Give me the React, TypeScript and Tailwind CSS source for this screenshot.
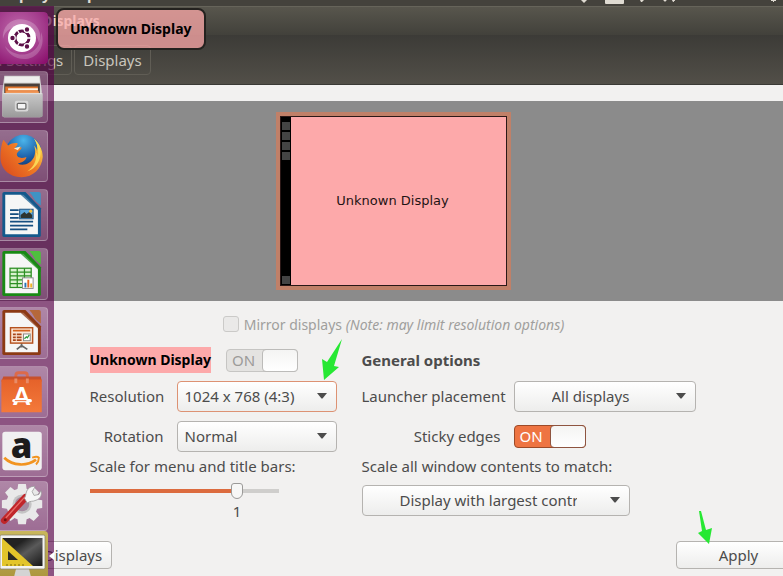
import { useState, type ReactNode } from 'react'
import { clsx } from 'clsx'

function DashIcon() {
  return (
    <svg viewBox="0 0 48 52" className="block h-full w-full">
      <defs>
        <radialGradient id="dash" cx="0.45" cy="0.35" r="0.8">
          <stop offset="0" stopColor="#c06bac" />
          <stop offset="0.6" stopColor="#a23a8b" />
          <stop offset="1" stopColor="#8a0f6c" />
        </radialGradient>
      </defs>
      <rect x="-4" width="52" height="52" rx="4" fill="url(#dash)" />
      <path d="M3 27C2 12 14 5 26 8s17 14 13 23c-2-9-7-15-16-16S5 17 3 27z" fill="#fff" opacity="0.22" />
      <path d="M41 20c5 12-2 26-15 27-10 1-19-6-21-13 6 7 14 10 22 8s14-9 14-22z" fill="#fff" opacity="0.2" />
      <circle cx="22" cy="26" r="14" fill="#fff" />
      <circle cx="22" cy="26" r="7" fill="none" stroke="#5d1049" strokeWidth="3" />
      {[[12.5, 26], [27, 17.5], [27, 34.5]].map(([x, y]) => (
        <circle key={`${x}-${y}`} cx={x} cy={y} r="2.8" fill="#5d1049" stroke="#fff" strokeWidth="1.2" />
      ))}
      <path d="M22 26l-5-8.500M22 26l-5 8.500M22 26h9" stroke="#fff" strokeWidth="1.300" />
      <circle cx="22" cy="26" r="5.300" fill="#fff" />
    </svg>
  )
}

function FilesIcon() {
  return (
    <svg viewBox="0 0 48 52" className="block h-full w-full">
      <defs>
        <linearGradient id="files" x2="0" y2="1">
          <stop offset="0" stopColor="#c9c9c9" />
          <stop offset="1" stopColor="#9a9a9a" />
        </linearGradient>
      </defs>
      <path d="M4 4h37l2 16v25q0 2-2 2H4q-2 0-2-2V20z" fill="#d5d5d3" />
      <path d="M5 5h35l1 6H4z" fill="#efefed" />
      <rect x="4" y="12" width="37" height="11" fill="#4a403a" />
      <path d="M5 15h34v8H5z" fill="#e2762d" />
      <path d="M8 17h31v2H8z" fill="#fff3e0" />
      <path d="M6 20h34v3H6z" fill="#f0995a" />
      <path d="M2 22h42v23q0 2-2 2H4q-2 0-2-2z" fill="url(#files)" />
      <path d="M3 22.5h40" stroke="#e3e3e3" />
      <rect x="15" y="30" width="14" height="11" rx="2" fill="#d8d8d8" />
      <rect x="17.5" y="32.500" width="9" height="6" rx="1" fill="#f4f4f4" stroke="#6b6b6b" strokeWidth="1.300" />
    </svg>
  )
}

function FirefoxIcon() {
  return (
    <svg viewBox="0 0 48 52" className="block h-full w-full">
      <defs>
        <radialGradient id="globe" cx="0.5" cy="0.15" r="0.8">
          <stop offset="0" stopColor="#4bb4ea" />
          <stop offset="0.6" stopColor="#1c5fa8" />
          <stop offset="1" stopColor="#0e2f66" />
        </radialGradient>
        <linearGradient id="fox" x1="0" y1="1" x2="1" y2="0.2">
          <stop offset="0" stopColor="#d8451c" />
          <stop offset="0.6" stopColor="#ef7a25" />
          <stop offset="1" stopColor="#fbd84a" />
        </linearGradient>
      </defs>
      <circle cx="24" cy="23" r="19" fill="url(#globe)" />
      <path d="M3 9l5 6c4-2 7-3 10-2 0 2-2 3-3 5l7-1c0 3-4 4-5 7 0 4 5 5 10 3 0 4-6 6-9 7 7 3 14-1 17-7 2-5 1-9 0-12 2 2 3 4 3 6 1-4 0-9-3-13 6 5 9 12 9 19-1 12-10 21-22 21C9 48 0 39 0 27 0 20 1 14 3 9z" fill="url(#fox)" />
      <path d="M35 8c7 6 8 14 6 20-2 7-7 12-13 14 8-6 10-13 9-20 1 1 2 3 2 5 1-8-1-14-4-19z" fill="#fbe25c" opacity="0.85" />
      <path d="M14 18l7-2-3 4z" fill="#fbe9c8" />
    </svg>
  )
}

// LibreOffice page with the folded corner, coloured per application
function OfficePage({ color, fold, children }: { color: string; fold: string; children: ReactNode }) {
  return (
    <svg viewBox="0 0 48 52" className="block h-full w-full">
      <path d="M4 2h22l16 17v28q0 2-2 2H4q-2 0-2-2V4q0-2 2-2z" fill={color} />
      <path d="M5 5h19l15 15v26H5z" fill="#f6f6f6" />
      <path d="M25 2l17 17v5L21 5z" fill={color} opacity="0.75" />
      <path d="M30 2h10q2 0 2 2v12q-6-4-7-7-2-4-5-7z" fill={fold} />
      {children}
    </svg>
  )
}

function WriterIcon() {
  return (
    <OfficePage color="#14598c" fold="#3f93c4">
      <path d="M10 21h9M10 25h9M10 29h9M10 33h24M10 37h24M10 41h18" stroke="#164f80" strokeWidth="1.800" />
      <rect x="20" y="20" width="14" height="10" fill="#5aa6dc" stroke="#1b4f7d" />
      <path d="M21 29v-3l4-3 2 2 3-2 3 3v3z" fill="#2c3430" />
      <circle cx="31.500" cy="22" r="1.600" fill="#f2bd3a" />
    </OfficePage>
  )
}

function CalcIcon() {
  return (
    <OfficePage color="#188a14" fold="#4fbf3f">
      <rect x="10" y="20" width="22" height="20" fill="#d9f2cf" stroke="#2b8f22" strokeWidth="1.300" />
      <path d="M10 24h22M10 28h22M10 32h22M10 36h22M17.500 20v20M25 20v20" stroke="#2b8f22" strokeWidth="1.300" />
      <rect x="23" y="30" width="11" height="11" fill="#fff" stroke="#8a8a8a" />
      <path d="M25 35h2v5h-2z" fill="#2a72b5" />
      <path d="M28 32h2v8h-2z" fill="#e8641c" />
      <path d="M31 36h2v4h-2z" fill="#f0b429" />
    </OfficePage>
  )
}

function ImpressIcon() {
  return (
    <OfficePage color="#8c3a14" fold="#b5683a">
      <path d="M17 43l5-4 6 4M22 35v6" stroke="#666" strokeWidth="1.800" fill="none" />
      <rect x="10.500" y="20.500" width="23" height="16" fill="#fbe6d6" stroke="#b5521f" strokeWidth="1.500" />
      <path d="M13 23.500h18" stroke="#d4641f" strokeWidth="2" />
      <path d="M13 27.500h3M17 27.500h5M13 30.500h3M17 30.500h5M13 33.500h3M17 33.500h5" stroke="#a8461a" strokeWidth="1.800" />
      <rect x="24" y="27" width="7" height="7" fill="#fff" stroke="#888" />
      <path d="M25 32l2-2 1 1 2-3" stroke="#2f9a3d" strokeWidth="1.300" fill="none" />
    </OfficePage>
  )
}

function SoftwareIcon() {
  return (
    <svg viewBox="0 0 48 52" className="block h-full w-full">
      <defs>
        <linearGradient id="bag" x2="0" y2="1">
          <stop offset="0" stopColor="#e5622a" />
          <stop offset="1" stopColor="#f4793a" />
        </linearGradient>
      </defs>
      <path d="M16 14V9q0-3 3-3h6q3 0 3 3v5" fill="none" stroke="#dc6a4a" strokeWidth="3" />
      <path d="M3 10h39l1 5H1z" fill="#c8502c" />
      <path d="M1 13h42v34H1z" fill="url(#bag)" />
      <path d="M16 12v5M28 12v5" stroke="#e88c68" strokeWidth="3" />
      <text x="22" y="40" textAnchor="middle" fontFamily="Lato, sans-serif" fontWeight="900" fontSize="25" fill="#fff">A</text>
      <path d="M14 35h17" stroke="#fff" strokeWidth="3.500" strokeLinecap="round" />
      <path d="M15 35h12" stroke="#ed6c32" strokeWidth="1" />
    </svg>
  )
}

function AmazonIcon() {
  return (
    <svg viewBox="0 0 48 52" className="block h-full w-full">
      <rect x="2" y="6" width="41" height="40" rx="3" fill="#f1f1f1" />
      <text x="22" y="33" textAnchor="middle" fontFamily="'Open Sans', sans-serif" fontWeight="800" fontSize="36" fill="#1c1c1c">a</text>
      <path d="M4 33c9 9 24 9 33 2" fill="none" stroke="#f29420" strokeWidth="2.800" />
      <path d="M33 33q5-2 7 0 0 4-3 7" fill="none" stroke="#f29420" strokeWidth="2" />
    </svg>
  )
}

function SettingsIcon() {
  return (
    <svg viewBox="0 0 48 50" className="block h-full w-full">
      <g transform="translate(22.500 23)" fill="#e9e9e9">
        {[0, 45, 90, 135].map((a) => (
          <path key={a} d="M-4-21h8l1 7V14l-1 7h-8l-1-7v-28z" transform={`rotate(${a})`} />
        ))}
        <circle r="16.500" />
        <circle r="10" fill="#c4c4c4" />
        <circle r="7.500" fill="#a58a9f" />
      </g>
      <path d="M4 40L26 16" stroke="#c0262a" strokeWidth="7" strokeLinecap="round" />
      <path d="M6 37L25 16" stroke="#e66a66" strokeWidth="1.500" strokeLinecap="round" />
      <circle cx="5" cy="39.500" r="1.500" fill="#731215" />
      <path d="M25 17c2-3 1-7 4-10 2-2 5-3 7-2l-3 5 2 4 5-1 2-4c2 4-1 9-5 10-4 2-6 0-9 3z" fill="#f6f6f6" stroke="#9a9a9a" strokeWidth="0.800" />
    </svg>
  )
}

function DisplaysIcon() {
  return (
    <svg viewBox="0 0 48 52" className="block h-full w-full">
      <defs>
        <linearGradient id="screen" x2="1" y2="1">
          <stop offset="0.300" stopColor="#222" />
          <stop offset="0.550" stopColor="#5a5a5a" />
          <stop offset="1" stopColor="#161616" />
        </linearGradient>
      </defs>
      <path d="M16 38h13l2 8H14z" fill="#d4d4d4" />
      <path d="M10 45h25v4H10z" fill="#ececec" />
      <rect x="0" y="4" width="45" height="34" rx="1.500" fill="#f3f3f1" stroke="#8a8570" strokeWidth="0.800" />
      <rect x="2.500" y="7" width="40" height="28" fill="url(#screen)" />
      <path d="M2 7v28h31z" fill="#e3c52a" />
      <path d="M8 20v9h10z" fill="#2a2a22" />
      <path d="M7 35v-2M11 35v-2M15 35v-2M19 35v-2M23 35v-2" stroke="#7d6a0d" />
    </svg>
  )
}

const PLAIN_TILE = 'border border-l-0 border-white/20 bg-linear-to-b from-white/30 to-white/15'

// The last two tiles are folded together at the bottom of the launcher
const APPS = [
  { name: 'Dash',            icon: <DashIcon />,     tile: 'mb-[7px] h-[52px]' },
  { name: 'Files',           icon: <FilesIcon />,    tile: clsx('mb-[7px] h-[52px]', PLAIN_TILE) },
  { name: 'Firefox',         icon: <FirefoxIcon />,  tile: clsx('mb-[7px] h-[52px]', PLAIN_TILE) },
  { name: 'Writer',          icon: <WriterIcon />,   tile: clsx('mb-[7px] h-[52px]', PLAIN_TILE) },
  { name: 'Calc',            icon: <CalcIcon />,     tile: clsx('mb-[7px] h-[52px]', PLAIN_TILE) },
  { name: 'Impress',         icon: <ImpressIcon />,  tile: clsx('mb-[7px] h-[52px]', PLAIN_TILE) },
  { name: 'Software',        icon: <SoftwareIcon />, tile: clsx('mb-[7px] h-[52px]', PLAIN_TILE) },
  { name: 'Amazon',          icon: <AmazonIcon />,   tile: clsx('mb-1 h-[52px]', PLAIN_TILE) },
  { name: 'System Settings', icon: <SettingsIcon />, tile: clsx('h-[50px]', PLAIN_TILE) },
  { name: 'Displays',        icon: <DisplaysIcon />, tile: 'h-[52px] bg-linear-to-b from-[#c9b75c] to-[#a8923a]' },
]

function Launcher() {
  return (
    <nav aria-label="Launcher" className="absolute top-1.5 bottom-0 left-0 w-[54px] overflow-hidden bg-[#560046]/65 pt-1.5">
      {APPS.map((app) => (
        <button key={app.name} aria-label={app.name} className={clsx('block w-12 overflow-hidden rounded-r-[4px]', app.tile)}>
          {app.icon}
        </button>
      ))}
      <svg viewBox="0 0 5 8" className="absolute right-0 bottom-4 h-2 w-[5px]">
        <path d="M5 0v8L0 4z" fill="#fff" />
      </svg>
    </nav>
  )
}

// Only the bottom edge of the desktop panel is in view
function TopPanel() {
  return (
    <div className="flex h-1.5 items-end justify-between overflow-hidden bg-[#44423c] text-[15px] leading-none font-bold text-[#dfdbd2]">
      <div className="flex gap-1 pb-1">
        <span className="-ml-1">Displays</span>
        <span>Help</span>
      </div>
      <svg viewBox="0 0 210 6" className="h-1.5 w-[210px]" fill="#dfdbd2">
        <path d="M8 0h6l-3 3z" />
        <rect x="32" y="-4" width="19" height="8" rx="1" />
        <path d="M67 0h4l-2 2h-1z" />
        <path d="M99 0l3 0-2 2M91 0h2v1h-2z" stroke="#dfdbd2" strokeWidth="0.800" />
        <path d="M198 0h5v1h-2v1h-1v-1h-2z" />
      </svg>
    </div>
  )
}

type ComboProps = { id: string; value: string; className?: string; textClass?: string }

function Combo({ id, value, className, textClass = 'pl-[7px] pr-8' }: ComboProps) {
  return (
    <div className={clsx('relative', className)}>
      <select
        id={id}
        className={clsx(
          'block h-[31px] w-full appearance-none rounded-[4px] border bg-linear-to-b from-white to-[#ededec] text-[15px] text-[#4c4c4c] outline-none',
          id === 'resolution' ? 'border-[#dd9273]' : 'border-[#b5b3b0]',
          textClass
        )}
      >
        <option>{value}</option>
      </select>
      <svg viewBox="0 0 10 6" className="pointer-events-none absolute top-3 right-[10px] h-1.5 w-[10px]">
        <path d="M0 0h10L5.500 5.500h-1z" fill="#4c4c4c" />
      </svg>
    </div>
  )
}

function Switch({ label, disabled = false }: { label: string; disabled?: boolean }) {
  const [on, setOn] = useState(true)

  return (
    <button
      role="switch"
      aria-checked={on}
      aria-label={label}
      disabled={disabled}
      onClick={() => setOn(!on)}
      className={clsx(
        'flex h-[23px] w-[72px] items-center justify-between rounded-[4px] border text-[15px]',
        disabled ? 'border-[#c6c5c3] bg-[#e4e3e1] text-[#9c9b99]' : 'border-[#9c4a28] bg-[#ee7442] text-white',
        !on && 'flex-row-reverse'
      )}
    >
      <span className="pl-[5px]">{on ? 'ON' : 'OFF'}</span>
      <span
        className={clsx(
          '-m-px h-[23px] w-9 rounded-[4px] border bg-linear-to-b from-[#f4f4f3] to-white',
          disabled ? 'border-[#bcbbb9]' : 'border-[#8e5440]'
        )}
      />
    </button>
  )
}

function ScaleSlider() {
  const [scale, setScale] = useState(1)
  const filled = (scale / 1.25) * 100

  return (
    <div className="w-[189px]">
      <input
        id="scale"
        type="range"
        min={0}
        max={1.25}
        step={0.125}
        value={scale}
        onChange={(e) => setScale(Number(e.target.value))}
        className="block h-5 w-full appearance-none bg-[length:100%_4px] bg-center bg-no-repeat outline-none [&::-webkit-slider-thumb]:h-4 [&::-webkit-slider-thumb]:w-3 [&::-webkit-slider-thumb]:appearance-none [&::-webkit-slider-thumb]:rounded-t-[3px] [&::-webkit-slider-thumb]:rounded-b-[6px] [&::-webkit-slider-thumb]:border [&::-webkit-slider-thumb]:border-[#9b9a98] [&::-webkit-slider-thumb]:bg-[#f7f7f6]"
        style={{ backgroundImage: `linear-gradient(to right, #dc6b3e ${filled}%, #cfcecc ${filled}%)` }}
      />
      <div className="px-1.5">
        <output htmlFor="scale" className="block h-5 w-0 leading-5" style={{ marginLeft: `${filled}%` }}>
          <span className="flex w-0 justify-center">{scale}</span>
        </output>
      </div>
    </div>
  )
}

export default function App() {
  return (
    <div className="relative flex h-screen flex-col overflow-hidden bg-[#f2f1f0] font-['Noto_Sans','Open_Sans',sans-serif] text-[15px] text-[#4c4c4c]">
      <TopPanel />

      {/* Title bar and breadcrumbs */}
      <header className="border-b border-[#3a3935] text-[#c9c5bc]">
        <div className="h-[29px] border-t border-[#66645a] bg-linear-to-b from-[#58564d] to-[#42413b] pl-[42px] text-[14px] leading-7 font-bold text-[#dfdbd2]">
          Displays
        </div>
        <div className="flex h-[49px] items-start gap-0.5 bg-linear-to-b from-[#3c3b37] to-[#524f48] pt-[10px] text-[15px]">
          <button className="-ml-[24px] h-[30px] rounded-[4px] border border-[#605d55] px-2 leading-7">All Settings</button>
          <button className="h-[30px] rounded-[4px] border border-[#605d55] px-2 leading-7">Displays</button>
        </div>
      </header>

      <main>
        {/* Monitor arrangement */}
        <div className="mt-4 flex h-[200px] items-center justify-center bg-[#8b8b8b] pl-1">
          <div className="h-[178px] w-[235px] border-4 border-[#c08068]">
            <div className="flex h-full border border-[#2b1817] bg-[#fda9aa]">
              <div className="flex w-[10px] flex-col gap-0.5 bg-black px-px pt-[5px] pb-px">
                <span className="h-2 bg-[#444]" />
                <span className="h-2 bg-[#444]" />
                <span className="h-2 bg-[#444]" />
                <span className="h-2 bg-[#444]" />
                <span className="mt-auto h-2 bg-[#444]" />
              </div>
              <div className="flex flex-1 items-center justify-center pr-3 font-['DejaVu_Sans',sans-serif] text-[13px] text-[#1f1414]">
                Unknown Display
              </div>
            </div>
          </div>
        </div>

        <div className="flex h-[46px] items-center justify-center gap-[5px] pl-1 text-[14px] text-[#a09f9d]">
          <input id="mirror" type="checkbox" disabled className="h-4 w-4 appearance-none rounded-[3px] border border-[#cbcac8] bg-[#eae9e8]" />
          <label htmlFor="mirror">
            Mirror displays <i>(Note: may limit resolution options)</i>
          </label>
        </div>

        <div className="flex justify-center gap-[25px] pl-0.5">
          <section className="w-[247px]">
            <div className="mb-2 flex h-[26px] items-center gap-[15px]">
              <h2 className="bg-[#fda9aa] text-[14px] leading-[26px] font-bold text-black">Unknown Display</h2>
              <Switch label="Unknown Display" disabled />
            </div>
            <div className="grid grid-cols-[74px_160px] items-center gap-x-[13px] gap-y-[9px] text-right">
              <label htmlFor="resolution" className="leading-[31px]">Resolution</label>
              <div className="relative">
                <Combo id="resolution" value="1024 x 768 (4:3)" />
                <svg viewBox="0 0 20 42" className="pointer-events-none absolute -top-[42px] right-[-5px] h-[42px] w-5">
                  <path d="M20 0l-8 27 5 1L2 41 0 20l5 3z" fill="#27e833" />
                </svg>
              </div>
              <label htmlFor="rotation" className="leading-[31px]">Rotation</label>
              <Combo id="rotation" value="Normal" />
            </div>
            <label htmlFor="scale" className="block h-[29px] leading-[29px] whitespace-nowrap">Scale for menu and title bars:</label>
            <ScaleSlider />
          </section>

          <section className="w-[334px]">
            <h2 className="mb-2 leading-[26px] font-bold">General options</h2>
            <div className="grid grid-cols-[139px_182px] items-center gap-x-[13px] gap-y-[9px] text-right">
              <label htmlFor="placement" className="leading-[31px] whitespace-nowrap">Launcher placement</label>
              <Combo id="placement" value="All displays" textClass="pl-[37px] pr-[52px]" />
              <span className="leading-[31px]">Sticky edges</span>
              <Switch label="Sticky edges" />
            </div>
            <label htmlFor="match" className="block h-[29px] leading-[29px] whitespace-nowrap">Scale all window contents to match:</label>
            <Combo id="match" value="Display with largest controls" className="mt-1 w-[268px]" textClass="pl-[37px] pr-[52px]" />
          </section>
        </div>
      </main>

      <footer className="mt-5 flex justify-between">
        <button className="-ml-4 h-7 rounded-[4px] border border-[#b5b3b0] bg-linear-to-b from-white to-[#ededec] px-[9px]">
          Detect Displays
        </button>
        <div className="relative -mr-[18px]">
          <button className="h-7 w-[125px] rounded-[4px] border border-[#b5b3b0] bg-linear-to-b from-white to-[#ededec]">
            Apply
          </button>
          <svg viewBox="0 0 14 33" className="pointer-events-none absolute -top-[30px] left-[22px] h-[33px] w-[14px]">
            <path d="M1 0h2l5 19 6-2-3 16L0 22l4-2z" fill="#27e833" />
          </svg>
        </div>
      </footer>

      {/* Monitor label bubble, drawn by the compositor above the window */}
      <div className="absolute top-2 left-14 rounded-[8px] border-2 border-[#24221f] bg-[#fda9aa]/75 px-3 text-[14px] leading-[38px] font-bold text-black">
        Unknown Display
      </div>
      <Launcher />
    </div>
  )
}
